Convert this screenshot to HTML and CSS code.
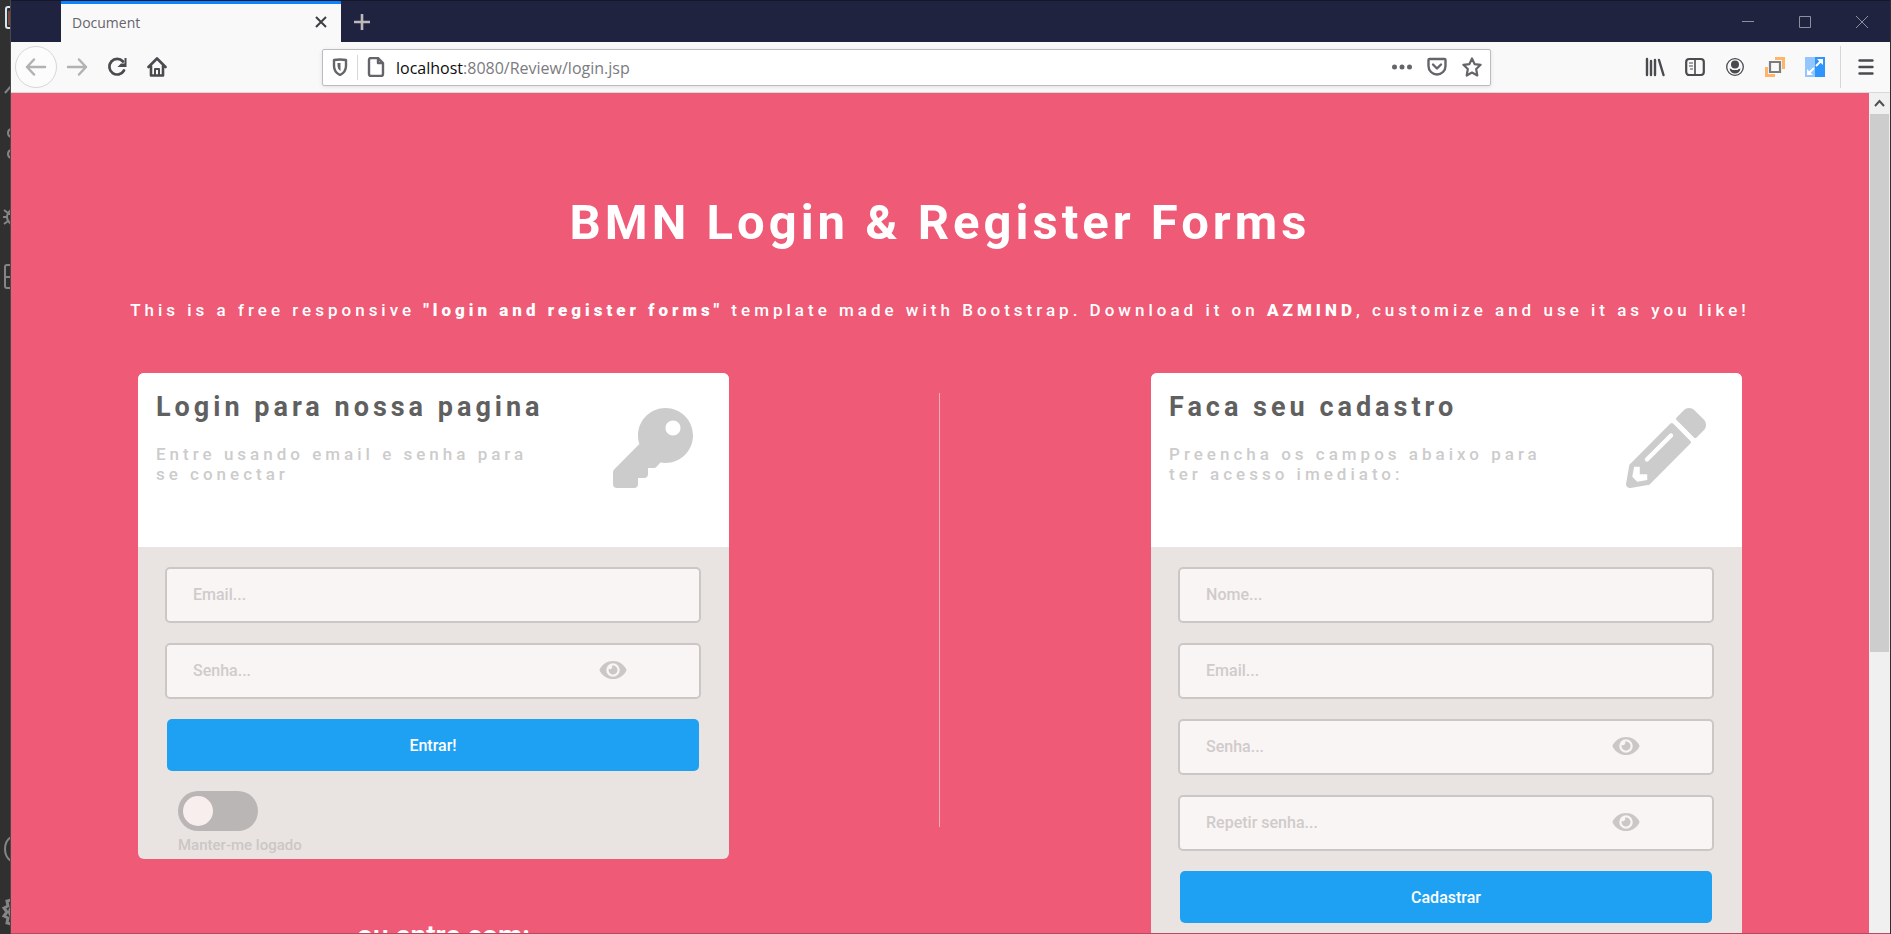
FILE: index.html
```html
<!DOCTYPE html>
<html lang="pt-br">
<head>
<meta charset="utf-8">
<title>Document</title>
<link rel="stylesheet" href="styles.css">
</head>
<body>
<svg class="defs" aria-hidden="true">
  <symbol id="eye" viewBox="0 0 576 512"><path d="M572.52 241.4C518.29 135.59 410.93 64 288 64S57.68 135.64 3.48 241.41a32.35 32.35 0 0 0 0 29.19C57.71 376.41 165.07 448 288 448s230.32-71.64 284.52-177.41a32.35 32.35 0 0 0 0-29.19zM288 400a144 144 0 1 1 144-144 143.93 143.93 0 0 1-144 144zm0-240a95.31 95.31 0 0 0-25.31 3.79 47.85 47.85 0 0 1-66.9 66.9A95.78 95.78 0 1 0 288 160z"/></symbol>
</svg>
<div class="desktop">
  <aside class="strip" aria-hidden="true">
    <svg width="11" height="300" viewBox="0 0 11 300" fill="none" stroke="#858585" stroke-width="2">
      <path d="M11 7H8q-2 0-2 2v17q0 2 2 2h3" stroke="#d7e4f2"/>
      <path d="M9 11v14" stroke="#7a4a3a"/>
      <path d="M5 93l6-7"/>
      <path d="M11 129q-3 1-3 4t3 4M11 150q-3 1-3 4t3 4"/>
      <path d="M4 210l4 3M3 217h5M4 224l4-3M11 210q-4 3-4 7t4 7M7 214h4"/>
      <path d="M11 265H7q-2 0-2 2v19q0 2 2 2h4M5 277h6"/>
    </svg>
    <svg width="11" height="110" viewBox="0 0 11 110" fill="none" stroke="#858585" stroke-width="2">
      <path d="M11 13Q5 17 5 25t6 12"/>
      <path d="M11 76l-4 1 1 5-4 2 3 4-3 4 4 2-1 5 4 1M11 84q-3 4 0 8" stroke-width="3"/>
    </svg>
  </aside>
  <div class="window">
    <header class="titlebar">
      <div class="tab">
        <span class="tab-title">Document</span>
        <button class="plain" aria-label="Close tab"><svg width="14" height="14" viewBox="0 0 14 14" stroke="#3e3e44" stroke-width="2"><path d="M2 2l10 10M12 2L2 12"/></svg></button>
      </div>
      <button class="plain newtab" aria-label="New tab"><svg width="18" height="18" viewBox="0 0 18 18" stroke="#bcb9bb" stroke-width="2.600"><path d="M9 1v16M1 9h16"/></svg></button>
      <div class="controls">
        <button class="plain" aria-label="Minimize"><svg width="14" height="14" viewBox="0 0 14 14" stroke="#8f909d"><path d="M1 6.500h12"/></svg></button>
        <button class="plain" aria-label="Maximize"><svg width="14" height="14" viewBox="0 0 14 14" fill="none" stroke="#8f909d"><path d="M1.500 1.500h11v11h-11z"/></svg></button>
        <button class="plain" aria-label="Close"><svg width="14" height="14" viewBox="0 0 14 14" stroke="#8f909d"><path d="M1 1l12 12M13 1L1 13"/></svg></button>
      </div>
    </header>
    <nav class="toolbar">
      <div class="nav-buttons">
        <button class="plain back" aria-label="Back"><svg width="22" height="20" viewBox="0 0 22 20" fill="none" stroke="#b3b1b3" stroke-width="2.500" stroke-linecap="round" stroke-linejoin="round"><path d="M20 10H2M9 2.500L2 10l7 7.500"/></svg></button>
        <button class="plain nav" aria-label="Forward"><svg width="22" height="20" viewBox="0 0 22 20" fill="none" stroke="#b3b1b3" stroke-width="2.500" stroke-linecap="round" stroke-linejoin="round"><path d="M2 10h18M13 2.500l7 7.500-7 7.500"/></svg></button>
        <button class="plain nav" aria-label="Reload"><svg width="20" height="20" viewBox="0 0 20 20" fill="none" stroke="#4a4a4f" stroke-width="2.700" stroke-linecap="round"><path d="M16 4.500A7.800 7.800 0 1 0 17 13.500"/><path d="M19.500 1v9h-9l3.500-3.500h3.500V1z" fill="#4a4a4f" stroke="none"/></svg></button>
        <button class="plain nav" aria-label="Home"><svg width="20" height="20" viewBox="0 0 20 20" fill="none" stroke="#4a4a4f" stroke-width="2.600" stroke-linecap="round" stroke-linejoin="round"><path d="M1.500 10L10 1.500l8.500 8.500M4 9v9.500h12V9"/><path d="M8 18v-6h4v6" stroke-width="2"/></svg></button>
      </div>
      <div class="urlbar">
        <svg width="16" height="18" viewBox="0 0 16 18" fill="none" stroke="#65646b" stroke-width="2.400"><path d="M2 2q6-1 12 0v6q0 6-6 9-6-3-6-9z" stroke-linejoin="round"/><path d="M8.500 5v8q-3-2-3-5V5z" fill="#65646b" stroke="none"/></svg>
        <span class="rule"></span>
        <svg width="18" height="20" viewBox="0 0 18 20" fill="none" stroke="#65646b" stroke-width="2.400" stroke-linejoin="round"><path d="M2 3q0-2 2-2h7l5 5v11q0 2-2 2H4q-2 0-2-2zM11 1v5h5"/></svg>
        <a class="url" href="#"><span class="host">localhost</span>:8080/Review/login.jsp</a>
        <div class="url-actions">
          <svg width="20" height="20" viewBox="0 0 20 20" fill="#65646b"><circle cx="2.500" cy="10" r="2.500"/><circle cx="10" cy="10" r="2.500"/><circle cx="17.500" cy="10" r="2.500"/></svg>
          <svg width="20" height="20" viewBox="0 0 20 20" fill="none" stroke="#65646b" stroke-width="2.400" stroke-linejoin="round" stroke-linecap="round"><path d="M1.500 3q0-1 1-1h15q1 0 1 1v6a8.500 8.500 0 0 1-17 0zM6 7.500l4 4 4-4"/></svg>
          <svg width="20" height="20" viewBox="0 0 20 20" fill="none" stroke="#65646b" stroke-width="2.200" stroke-linejoin="round"><path d="M10 1.500l2.600 5.600 6 .7-4.400 4.200 1.100 6.500L10 15.500l-5.300 3 1.100-6.500L1.400 7.800l6-.7z"/></svg>
        </div>
      </div>
      <div class="tools">
        <svg width="20" height="20" viewBox="0 0 20 20" stroke="#4a4a4f" stroke-width="2.400" stroke-linecap="round"><path d="M2 2v16M6 4v14M10 3v15M14 3l4.500 15"/></svg>
        <svg width="20" height="20" viewBox="0 0 20 20" fill="none" stroke="#4a4a4f" stroke-width="2.200"><rect x="1.200" y="2" width="17.600" height="16" rx="3"/><path d="M10 2v16" stroke-width="1.600"/><path d="M4 6h4M4 9h4M5 12h3" stroke-width="1.100"/></svg>
        <svg width="20" height="20" viewBox="0 0 20 20" fill="#4a4a4f"><circle cx="10" cy="10" r="8.300" fill="none" stroke="#4a4a4f" stroke-width="1.300"/><circle cx="10" cy="7.500" r="4"/><path d="M4.500 11.500q2 0 3 1.500h5q1-1.500 3-1.500-1 5-5.500 5t-5.500-5z"/></svg>
        <svg width="20" height="20" viewBox="0 0 20 20" fill="none"><path d="M10 1.500h8.500V12M1.500 10v8.500H10" stroke="#ffb469" stroke-width="3"/><path d="M5 5h10v10H5z" stroke="#7c7c7c" stroke-width="2.200"/></svg>
        <svg width="20" height="20" viewBox="0 0 20 20"><path fill="#93c5ff" d="M0 0h10v20H0z"/><path fill="#2d95fb" d="M10 0h10v20H10z"/><path d="M4 16l5-5M11 9l5-5" stroke="#fff" stroke-width="2"/><path fill="#fff" d="M12 2h6v6zM2 12v6h6z"/></svg>
        <span class="rule tall"></span>
        <button class="plain" aria-label="Menu"><svg width="16" height="16" viewBox="0 0 16 16" stroke="#4a4a4f" stroke-width="2.400" stroke-linecap="round"><path d="M1.500 1.500h13M1.500 8h13M1.500 14.500h13"/></svg></button>
      </div>
    </nav>
    <div class="viewport">
      <main class="page">
        <h1>BMN Login &amp; Register Forms</h1>
        <p class="intro">This is a free responsive <strong>"login and register forms"</strong> template made with Bootstrap. Download it on <strong>AZMIND</strong>, customize and use it as you like!</p>
        <div class="columns">
          <section class="column">
            <div class="card">
              <div class="card-head">
                <div class="card-text">
                  <h2>Login para nossa pagina</h2>
                  <p>Entre usando email e senha para se conectar</p>
                </div>
                <svg class="card-icon" viewBox="0 0 512 512"><path d="M512 176.001C512 273.203 433.202 352 336 352c-11.220 0-22.190-1.062-32.827-3.069l-24.012 27.014A23.999 23.999 0 0 1 261.223 384H224v40c0 13.255-10.745 24-24 24h-40v40c0 13.255-10.745 24-24 24H24c-13.255 0-24-10.745-24-24v-78.059c0-6.365 2.529-12.470 7.029-16.971l161.802-161.802C163.108 213.814 160 195.271 160 176 160 78.798 238.797.001 335.999 0 433.488-.001 512 78.511 512 176.001zM336 128c0 26.510 21.490 48 48 48s48-21.490 48-48-21.490-48-48-48-48 21.490-48 48z"/></svg>
              </div>
              <form class="card-body">
                <input class="field" type="email" placeholder="Email..." aria-label="Email">
                <div class="password">
                  <input class="field" type="password" placeholder="Senha..." aria-label="Senha">
                  <button class="plain reveal" type="button" aria-label="Mostrar senha"><svg width="28" height="24"><use href="#eye"/></svg></button>
                </div>
                <button class="submit" type="button">Entrar!</button>
                <div class="remember">
                  <input class="switch" type="checkbox" id="keep">
                  <label for="keep">Manter-me logado</label>
                </div>
              </form>
            </div>
            <h3>ou entre com:</h3>
          </section>
          <div class="divider"></div>
          <section class="column">
            <div class="card">
              <div class="card-head">
                <div class="card-text">
                  <h2>Faca seu cadastro</h2>
                  <p>Preencha os campos abaixo para ter acesso imediato:</p>
                </div>
                <svg class="card-icon" viewBox="0 0 512 512"><path d="M497.900 142.100l-46.100 46.100c-4.700 4.700-12.300 4.700-17 0l-111-111c-4.700-4.700-4.700-12.300 0-17l46.100-46.100c18.700-18.700 49.100-18.700 67.900 0l60.100 60.100c18.800 18.700 18.800 49.100 0 67.900zM284.200 99.800L21.600 362.400.4 483.900c-2.900 16.400 11.400 30.600 27.800 27.800l121.500-21.300 262.600-262.600c4.700-4.700 4.700-12.300 0-17l-111-111c-4.800-4.700-12.400-4.700-17.100 0zM124.100 339.900c-5.500-5.500-5.500-14.300 0-19.800l154-154c5.500-5.500 14.300-5.500 19.800 0s5.500 14.300 0 19.800l-154 154c-5.500 5.500-14.300 5.500-19.800 0zM88 424h48v36.300l-64.500 11.300-31.100-31.100L51.700 376H88v48z"/></svg>
              </div>
              <form class="card-body register">
                <input class="field" type="text" placeholder="Nome..." aria-label="Nome">
                <input class="field" type="email" placeholder="Email..." aria-label="Email">
                <div class="password">
                  <input class="field" type="password" placeholder="Senha..." aria-label="Senha">
                  <button class="plain reveal" type="button" aria-label="Mostrar senha"><svg width="28" height="24"><use href="#eye"/></svg></button>
                </div>
                <div class="password">
                  <input class="field" type="password" placeholder="Repetir senha..." aria-label="Repetir senha">
                  <button class="plain reveal" type="button" aria-label="Mostrar senha"><svg width="28" height="24"><use href="#eye"/></svg></button>
                </div>
                <button class="submit" type="button">Cadastrar</button>
              </form>
            </div>
          </section>
        </div>
      </main>
      <div class="scrollbar" aria-hidden="true">
        <svg width="19" height="21" viewBox="0 0 19 21" fill="none" stroke="#505050" stroke-width="2"><path d="M5 13l4.500-5 4.500 5"/></svg>
        <div class="thumb"></div>
      </div>
    </div>
  </div>
</div>
</body>
</html>
```
FILE: styles.css
```css
* {
  box-sizing: border-box;
}

body {
  margin: 0;
  font-family: Roboto, "Liberation Sans", sans-serif;
}

h1, h2, h3, p {
  margin: 0;
}

svg {
  display: block;
  flex: none;
}

.defs {
  display: none;
}

.plain {
  display: flex;
  align-items: center;
  justify-content: center;
  padding: 0;
  border: 0;
  background: none;
}

.desktop {
  display: flex;
  height: 100vh;
  background: #303030;
  overflow: hidden;
}

.strip {
  display: flex;
  flex-direction: column;
  justify-content: space-between;
  width: 11px;
  flex: none;
  border-right: 1px solid #484848;
  overflow: hidden;
}

.window {
  display: flex;
  flex-direction: column;
  flex: 1;
  min-width: 0;
  margin-right: 1px;
  border-bottom: 1px solid #b54a60;
}

/* Browser chrome */
.titlebar {
  display: flex;
  align-items: stretch;
  height: 42px;
  flex: none;
  padding-left: 50px;
  border-top: 1px solid #15172b;
  background: #202340;
}

.tab {
  display: flex;
  align-items: center;
  justify-content: space-between;
  width: 280px;
  padding: 0 13px 2px 11px;
  border-top: 3px solid #0a84ff;
  background: #f9f9fa;
}

.tab-title {
  font: 14px "Open Sans", sans-serif;
  color: #66656c;
}

.newtab {
  width: 42px;
}

.controls {
  display: flex;
  align-items: center;
  gap: 43px;
  margin-left: auto;
  padding: 0 21px 0 0;
}

.toolbar {
  display: flex;
  align-items: center;
  height: 51px;
  flex: none;
  padding: 0 16px 0 4px;
  border-bottom: 1px solid #d9d9da;
  background: #f9f9fa;
}

.nav-buttons {
  display: flex;
  align-items: center;
  width: 307px;
  flex: none;
}

.back {
  width: 42px;
  height: 42px;
  border: 1px solid #d7d7d9;
  border-radius: 50%;
  background: #fcfcfd;
}

.nav {
  width: 40px;
  height: 40px;
}

.urlbar {
  display: flex;
  align-items: center;
  gap: 9px;
  flex: 1;
  height: 37px;
  padding: 0 8px 0 9px;
  border: 1px solid #bcbcbe;
  border-radius: 2px;
  background: #fff;
  box-shadow: 0 1px 4px #0000001a;
}

.rule {
  width: 1px;
  height: 25px;
  background: #d7d7db;
}

.rule.tall {
  height: 42px;
}

.url {
  margin-left: 2px;
  padding-top: 2px;
  font: 16px "Open Sans", sans-serif;
  color: #7b7b80;
  text-decoration: none;
}

.host {
  color: #0c0c0d;
}

.url-actions {
  display: flex;
  gap: 15px;
  margin-left: auto;
}

.tools {
  display: flex;
  align-items: center;
  gap: 20px;
  margin-left: 154px;
}

.tools .rule {
  margin: 0 -3px 0 -5px;
}

/* Page */
.viewport {
  display: flex;
  flex: 1;
  min-height: 0;
  overflow: hidden;
  background: #ef5a76;
}

.page {
  flex: 1;
  min-width: 0;
  padding-top: 100px;
  color: #fff;
  overflow: hidden;
}

h1 {
  font-size: 49px;
  font-weight: 700;
  line-height: 60px;
  letter-spacing: 4px;
  text-align: center;
}

.intro {
  margin-top: 45px;
  font-size: 17px;
  font-weight: 500;
  line-height: 24px;
  letter-spacing: 4px;
  text-align: center;
}

.intro strong {
  font-weight: 900;
}

.columns {
  display: grid;
  grid-template-columns: 7fr 5fr 7fr;
  margin-top: 51px;
  padding: 0 127px;
}

.divider {
  justify-self: center;
  width: 1px;
  height: 434px;
  margin-top: 20px;
  background: #f7acba;
}

.card {
  border-radius: 6px;
  background: #e9e4e1;
  overflow: hidden;
}

.card-head {
  display: flex;
  justify-content: space-between;
  height: 174px;
  padding: 16px 36px 0 18px;
  background: #fff;
}

.card-text {
  width: 400px;
}

.card-icon {
  width: 80px;
  height: 80px;
  margin-top: 19px;
  fill: #ccc;
}

h2 {
  font-size: 27px;
  font-weight: 700;
  line-height: 36px;
  letter-spacing: 4px;
  color: #606060;
}

.card-text p {
  margin-top: 19px;
  font-size: 17px;
  font-weight: 500;
  line-height: 20px;
  letter-spacing: 4px;
  color: #ccc;
}

.card-body {
  display: flex;
  flex-direction: column;
  gap: 20px;
  padding: 20px 28px 4px 27px;
}

.card-body.register {
  padding-bottom: 30px;
}

.field {
  display: block;
  width: 100%;
  height: 56px;
  padding: 0 26px 2px;
  border: 2px solid #cbc7c7;
  border-radius: 5px;
  background: #f9f5f4;
  font: 500 16px Roboto, sans-serif;
  color: #555;
}

.field::placeholder {
  color: #d0cbcb;
}

.password {
  display: grid;
  align-items: center;
}

.password > * {
  grid-area: 1 / 1;
}

.reveal {
  justify-self: end;
  margin: 0 74px 2px 0;
}

.reveal svg {
  fill: #cbc7c7;
}

.submit {
  height: 52px;
  margin: 0 2px;
  border: 0;
  border-radius: 5px;
  background: #1ea1f3;
  font: 500 16px Roboto, sans-serif;
  color: #fff;
}

.remember {
  display: flex;
  flex-direction: column;
  gap: 4px;
  padding-left: 13px;
  font-size: 15px;
  font-weight: 500;
  line-height: 20px;
  color: #cbc7c7;
}

.switch {
  appearance: none;
  display: flex;
  align-items: center;
  width: 80px;
  height: 40px;
  margin: 0;
  padding: 5px;
  border-radius: 20px;
  background: #bab6b5;
}

.switch::before {
  content: "";
  width: 30px;
  height: 30px;
  border-radius: 50%;
  background: #f8eeee;
}

.switch:checked::before {
  margin-left: auto;
}

h3 {
  margin-top: 57px;
  padding-left: 20px;
  font-size: 28px;
  font-weight: 600;
  line-height: 40px;
  text-align: center;
}

.scrollbar {
  width: 21px;
  flex: none;
  padding: 0 1px;
  background: #f0f0f0;
}

.thumb {
  height: 64%;
  background: #cdcdcd;
}
```
